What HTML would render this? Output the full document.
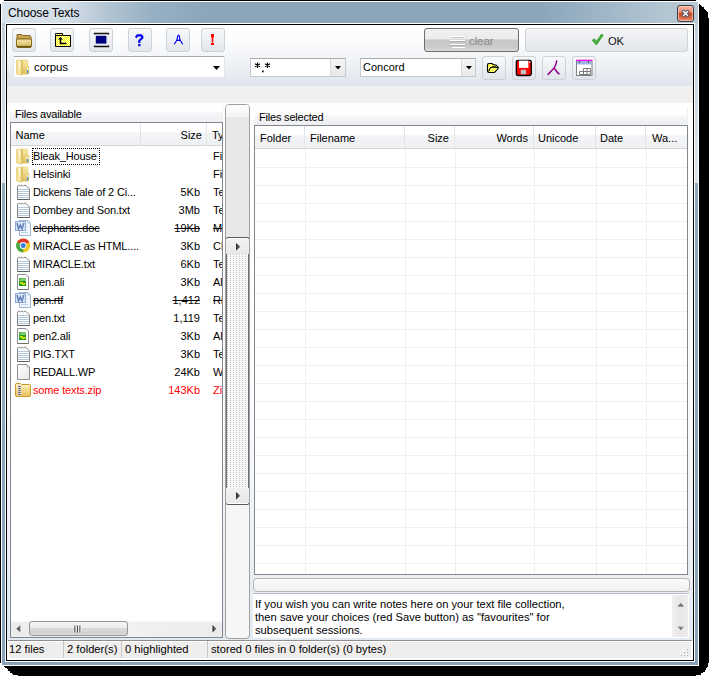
<!DOCTYPE html>
<html><head><meta charset="utf-8">
<style>
*{box-sizing:border-box;margin:0;padding:0}
html,body{width:715px;height:682px;overflow:hidden;background:#fff;position:relative;font-family:"Liberation Sans",sans-serif;font-size:11px;color:#000}
.a{position:absolute}
svg{display:block}
#shadow{position:absolute;left:0;top:0}
#win{position:absolute;left:2px;top:2px;width:696px;height:663px;background:linear-gradient(#bccbd8 0,#c9d6e0 60px,#d6e0e8 150px,#dce5ec 181px,#8fa9bd 181px,#8ba6bb 400px,#88a3b9 100%)}
#title{position:absolute;left:2px;top:2px;width:696px;height:21px;background:linear-gradient(90deg,#d9e3eb 0,#d5dfe8 65px,#b3c5d3 105px,#97b0c3 150px,#8ca7bc 200px,#8ba6bb 540px,#a2b8c8 610px,#b4c5d2 660px,#b8c9d6 100%)}
#titletxt{position:absolute;left:6px;top:4px;font-size:12px;line-height:14px;color:#000;letter-spacing:-0.1px}
#client{position:absolute;left:6px;top:24px;width:688px;height:637px;border:1px solid #000;background:#f0f0f0;outline:1px solid #fff}
#tb{position:absolute;left:7px;top:25px;width:686px;height:61px;background:linear-gradient(#ffffff,#fbfcfd 15px,#eef1f5 40px,#e0e6ed 60px)}
#panel{position:absolute;left:7px;top:103px;width:686px;height:537px;background:linear-gradient(#ffffff,#fbfcfd 300px,#e4eaf1)}
.btn{position:absolute;width:24px;height:24px;border:1px solid #cdd2d9;border-radius:3px;background:linear-gradient(#f8f9fb,#eceff3 50%,#e1e5eb)}
.btn svg{position:absolute;left:0;top:0}
.combo{position:absolute;background:#fff;border:1px solid #c6c9ce;border-top-color:#a8abb0}
.dd{position:absolute;top:0;bottom:0;right:0;border-left:1px solid #d8dadd;background:linear-gradient(#f6f6f6,#e8e8e8)}
#status{position:absolute;left:7px;top:640px;width:686px;height:20px;background:#fff}
#stline{position:absolute;left:8px;top:640px;width:684px;height:1px;background:#8e8e8e}
#stbg{position:absolute;left:9px;top:642px;width:682px;height:16px;background:#f0eded}
.sep{position:absolute;top:641px;width:1px;height:17px;background:#c8c6c6}
.st{position:absolute;top:643px;font-size:11.2px;line-height:13px;white-space:nowrap}

.lbl{position:absolute;font-size:11px;line-height:13px;white-space:nowrap;letter-spacing:-0.2px}
.list{position:absolute;background:#fff;border:1px solid #828790;overflow:hidden}
.hdr{position:absolute;left:0;top:0;height:23px;background:linear-gradient(#ffffff 0,#ffffff 40%,#f3f4f6 45%,#eef0f3 100%);border-bottom:1px solid #d5d5d5}
.hs{position:absolute;top:0;width:1px;height:22px;background:#e3e4e6}
.ht{position:absolute;top:6px;font-size:11px;line-height:13px;white-space:nowrap}
.row{position:absolute;left:0;width:211px;height:18px}
.row svg{position:absolute;left:5px;top:1px;overflow:visible}
.nm{position:absolute;left:22px;top:3px;font-size:11px;line-height:13px;white-space:nowrap;letter-spacing:-0.15px}
.sz{position:absolute;right:22px;top:3px;font-size:11px;line-height:13px;white-space:nowrap;text-align:right}
.ty{position:absolute;left:202px;top:3px;font-size:11px;line-height:13px;white-space:nowrap}
.strike{text-decoration:line-through}
.red{color:#ff0000}
</style></head><body>
<svg id="shadow" width="715" height="682">
<rect x="4" y="0" width="692" height="1" fill="#000"/>
<rect x="0" y="4" width="1" height="659" fill="#000"/>
<path shape-rendering="crispEdges" d="M4,666 L699,666 L699,4 L700,4 L700,5 L701,5 L701,6 L702,6 L702,7 L704,7 L704,9 L705,9 L705,10 L706,10 L706,11 L707,11 L707,12 L708,12 L708,18 L709,18 L709,663 L708,663 L708,667 L707,667 L707,668 L706,668 L706,670 L705,670 L705,672 L703,672 L703,673 L701,673 L701,675 L696,675 L696,676 L18,676 L18,675 L13,675 L13,674 L12,674 L12,673 L10,673 L10,671 L8,671 L8,669 L7,669 L7,668 L5,668 L5,667 L4,667 Z" fill="#000"/>
</svg>
<svg width="0" height="0" style="position:absolute">
<defs>
<linearGradient id="gvf" x1="0" y1="0" x2="1" y2="0"><stop offset="0" stop-color="#f2dc86"/><stop offset=".3" stop-color="#fff6c8"/><stop offset=".6" stop-color="#f0d880"/><stop offset="1" stop-color="#d9b95a"/></linearGradient>
<linearGradient id="gpage" x1="0" y1="0" x2="1" y2="1"><stop offset="0" stop-color="#ffffff"/><stop offset="1" stop-color="#e8e8e8"/></linearGradient>
<linearGradient id="gzip" x1="0" y1="0" x2="0" y2="1"><stop offset="0" stop-color="#fff0b8"/><stop offset="1" stop-color="#e8c060"/></linearGradient>
<symbol id="i-folder" viewBox="0 0 16 16" overflow="visible">
<linearGradient id="gfl" x1="0" y1="0" x2="1" y2="0"><stop offset="0" stop-color="#ecd274"/><stop offset=".45" stop-color="#fbeeb0"/><stop offset="1" stop-color="#e2c464"/></linearGradient>
<linearGradient id="gfr" x1="0" y1="0" x2="0" y2="1"><stop offset="0" stop-color="#f8eaa8"/><stop offset=".5" stop-color="#ecd486"/><stop offset="1" stop-color="#dfc060"/></linearGradient>
<path d="M0.3,2 Q0.3,0.8 1.5,0.8 L11,0.8 Q12.2,0.8 12.2,2 L12.2,7 L13.2,7.6 L13.2,14.6 L12.2,15.2 L6.2,15.6 L5.6,16.4 L1.5,15.6 Q0.3,15.4 0.3,14.4 Z" fill="#e4c86c"/>
<rect x="6.3" y="1.3" width="5.6" height="13.8" fill="url(#gfr)"/>
<path d="M0.8,2 Q0.8,1.2 1.6,1.2 L6.2,1.2 L6.2,15.4 L1.5,15 Q0.8,14.9 0.8,14.3 Z" fill="url(#gfl)"/>
<path d="M6.3,1.5 L6.3,15.3" stroke="#d2b24e" stroke-width=".8"/>
<path d="M2.6,2 L3.6,3 L3.6,9" stroke="#fffdf0" stroke-width="1.1" fill="none"/>
<rect x="11" y="9" width="1.2" height="2.2" fill="#f4f8fc"/>
<rect x="11" y="11" width="1.2" height="3.4" fill="#2f92e0"/>
</symbol>
<symbol id="i-txt" viewBox="0 0 16 16">
<path d="M1.5,2 L3,1 L4.5,2 L6,1 L7.5,2 L9,1 L10.5,2 L13.5,5 L13.5,15.5 L1.5,15.5 Z" fill="#fff" stroke="#8a8a8a" stroke-width="1"/>
<path d="M2,5.5 h11 M2,7.5 h11 M2,9.5 h11 M2,11.5 h11 M2,13.5 h11" stroke="#b4c8dc" stroke-width="1"/>
<path d="M1.5,15.5 h12" stroke="#606060" stroke-width="1"/>
</symbol>
<symbol id="i-blank" viewBox="0 0 16 16">
<path d="M1.5,0.5 L11,0.5 L13.5,3 L13.5,15.5 L1.5,15.5 Z" fill="url(#gpage)" stroke="#8e8e8e" stroke-width="1"/>
<path d="M11,0.5 L11,3 L13.5,3" fill="#fff" stroke="#aaa" stroke-width="1"/>
</symbol>
<symbol id="i-word" viewBox="0 0 16 16" overflow="visible">
<path d="M3.5,0.5 L12,0.5 L14.5,3 L14.5,15.5 L3.5,15.5 Z" fill="#f2f6fc" stroke="#9fb6d6" stroke-width="1"/>
<path d="M12,0.5 L12,3 L14.5,3" fill="none" stroke="#b0c4de" stroke-width="1"/>
<path d="M5,12.5 h7" stroke="#c2d2e6"/>
<rect x="-0.5" y="1.5" width="10" height="9" fill="#dce7f5" stroke="#8eaad6" stroke-width="1"/>
<path d="M1,3 L2.6,9 L4.3,5 L6,9 L7.8,3" fill="none" stroke="#5f7fb8" stroke-width="1.5"/>
</symbol>
<symbol id="i-chrome" viewBox="0 0 16 16">
<circle cx="7.2" cy="7.5" r="7" fill="#f2c81e"/>
<path d="M7.2,7.5 L1.1,4 A7,7 0 0 1 13.26,4 Z" fill="#dc3b2c"/>
<path d="M7.2,7.5 L1.1,4 A7,7 0 0 0 7.2,14.5 Z" fill="#45a845"/>
<circle cx="7.2" cy="7.5" r="3.4" fill="#fff"/>
<circle cx="7.2" cy="7.5" r="2.5" fill="#3b7fd9"/>
</symbol>
<symbol id="i-ali" viewBox="0 0 16 16">
<path d="M1.5,0.5 L10,0.5 L12.5,3 L12.5,15.5 L1.5,15.5 Z" fill="#fff" stroke="#8e8e8e" stroke-width="1"/>
<path d="M1.5,15.5 h11" stroke="#707070"/>
<rect x="3" y="4" width="7" height="8" fill="#1e9a1e"/>
<rect x="3" y="4" width="7" height="3" fill="#7acb6a"/>
<rect x="3.3" y="4.3" width="1.2" height="1.2" fill="#0a6a0a"/>
<path d="M4,9 Q6,8.5 7,10 Q8,11 9,9" fill="none" stroke="#f4f000" stroke-width="1.5"/>
</symbol>
<symbol id="i-zip" viewBox="0 0 16 16" overflow="visible">
<path d="M-0.5,2.5 Q-0.5,1.5 0.5,1.5 L4.5,1.5 L5.5,2.5 L13.5,2.5 Q14.5,2.5 14.5,3.5 L14.5,13.5 Q14.5,14.5 13.5,14.5 L0.5,14.5 Q-0.5,14.5 -0.5,13.5 Z" fill="url(#gzip)" stroke="#c99a2a" stroke-width="1"/>
<path d="M0,4 L14,4" stroke="#fff6d0" stroke-width="1"/>
<rect x="2" y="3" width="3" height="11" fill="#d8d8d8"/>
<path d="M2.5,4.5 h2 M2.5,6.5 h2 M2.5,8.5 h2 M2.5,10.5 h2 M2.5,12.5 h2" stroke="#505050" stroke-width="1"/>
</symbol>
</defs></svg>
<div id="win"></div>
<div id="title"><div id="titletxt">Choose Texts</div></div>
<div class="a" style="left:677px;top:5px;width:17px;height:17px;border:1px solid #3c3c3c;border-radius:3px;background:linear-gradient(#f4b2a0 0,#ea9079 40%,#c64a26 50%,#d25a34 65%,#ec8a6c 100%);box-shadow:inset 0 0 0 1px rgba(255,220,210,.6)">
<svg class="a" style="left:3px;top:3px" width="9" height="9" viewBox="0 0 9 9"><path d="M2.6,2.6 L6.4,6.4 M6.4,2.6 L2.6,6.4" stroke="#3a4660" stroke-width="3" stroke-linecap="square"/><path d="M2.6,2.6 L6.4,6.4 M6.4,2.6 L2.6,6.4" stroke="#fff" stroke-width="1.5" stroke-linecap="square"/></svg></div>
<div id="client"></div>
<div id="tb"></div>
<div id="panel"></div>

<!-- toolbar row 1 -->
<div class="btn" style="left:12px;top:28px"><svg width="22" height="22" viewBox="0 0 22 22">
<defs><linearGradient id="fo1" x1="0" y1="0" x2="0" y2="1"><stop offset="0" stop-color="#f3e4a8"/><stop offset="0.6" stop-color="#e3cb7c"/><stop offset="1" stop-color="#b8973c"/></linearGradient></defs>
<path d="M4,5.5 L9,5.5 L10,6.5 L17,6.5 L18,8 L18,10 L4,10 Z" fill="#c6a652" stroke="#8c6d22" stroke-width="1"/>
<path d="M3.5,10 L18.5,10 L18.5,17.5 L17.5,18.5 L4.5,18.5 L3.5,17.5 Z" fill="url(#fo1)" stroke="#8a6a1c" stroke-width="1"/>
<rect x="4" y="17" width="14" height="1.5" fill="#6e5414"/>
</svg></div>
<div class="btn" style="left:50px;top:28px"><svg width="22" height="22" viewBox="0 0 22 22">
<defs><pattern id="dith" width="2" height="2" patternUnits="userSpaceOnUse"><rect width="2" height="2" fill="#ffff00"/><rect width="1" height="1" fill="#ffffc0"/><rect x="1" y="1" width="1" height="1" fill="#ffffc0"/></pattern></defs>
<path d="M4.5,5.5 L4.5,4.5 L11.5,4.5 L11.5,6.5 L19.5,6.5 L19.5,17.5 L4.5,17.5 Z" fill="url(#dith)" stroke="#000" stroke-width="1"/>
<path d="M5,6.5 L11,6.5" stroke="#000" stroke-width="1"/>
<path d="M7,10.5 L9.5,8 L12,10.5 Z" fill="#000"/>
<path d="M9.5,10 L9.5,14.5 L15.5,14.5" fill="none" stroke="#000" stroke-width="1.5"/>
</svg></div>
<div class="btn" style="left:89px;top:28px"><svg width="22" height="22" viewBox="0 0 22 22">
<path d="M4.5,5.5 L4.5,4.5 L18.5,4.5 L18.5,5.5" fill="none" stroke="#111" stroke-width="1.3"/>
<path d="M4.5,16.5 L4.5,17.5 L18.5,17.5 L18.5,16.5" fill="none" stroke="#111" stroke-width="1.3"/>
<rect x="5.8" y="6.8" width="10.6" height="7.8" fill="#000080"/>
</svg></div>
<div class="btn" style="left:128px;top:28px"><svg width="22" height="22" viewBox="0 0 22 22">
<path d="M6.8,8.6 L8.6,6.3 L12.2,6.3 L13.3,7.6 L13.3,8.8 L10.3,11.8 L10.3,14" fill="none" stroke="#0000f0" stroke-width="2.2" stroke-linejoin="round"/>
<rect x="9.2" y="15" width="2.3" height="2.2" fill="#0000f0"/>
</svg></div>
<div class="btn" style="left:166px;top:28px"><svg width="22" height="22" viewBox="0 0 22 22">
<path d="M7.3,15.3 L10.2,10.5 L10.6,7.2 L11.5,6.2 L12.4,7.2 L12.8,10.5 L15.7,15.3 M9,11.3 L14,11.3" fill="none" stroke="#0000f0" stroke-width="1.2" stroke-linejoin="round"/>
</svg></div>
<div class="btn" style="left:201px;top:28px"><svg width="22" height="22" viewBox="0 0 22 22">
<path d="M9,5 L12,5 L12,8.3 L11.3,8.3 L11.3,13.4 L9.7,13.4 L9.7,8.3 L9,8.3 Z" fill="#ff0000"/>
<rect x="9" y="14" width="3" height="2" fill="#ff0000"/>
</svg></div>

<div class="btn" style="left:424px;top:28px;width:95px;border-color:#6f6f6f;background:linear-gradient(#f1f1f1 0,#ebebeb 45%,#c8c8c8 50%,#c9c9c9 80%,#dadada 100%)"></div>
<svg class="a" style="left:450px;top:36px" width="18" height="12"><rect x="2" y="0" width="12" height="1" fill="#fff"/><rect x="0" y="4" width="15" height="1" fill="#fff"/><rect x="0" y="8" width="15" height="1" fill="#fff"/><rect x="2" y="11" width="13" height="1" fill="#fff"/><rect x="2" y="1" width="12" height="1" fill="#9a9a9a" opacity=".5"/><rect x="0" y="5" width="15" height="1" fill="#9a9a9a" opacity=".6"/><rect x="0" y="9" width="15" height="1" fill="#9a9a9a" opacity=".6"/></svg>
<div class="a" style="left:469px;top:34px;font-size:11.8px;line-height:14px;color:#8a8a8a;letter-spacing:-0.2px">clear</div>
<div class="btn" style="left:525px;top:28px;width:163px;border-color:#cfd3d9;background:linear-gradient(#f4f5f7,#eceef2 50%,#e2e5ea)"></div>
<svg class="a" style="left:591px;top:33px" width="13" height="13" viewBox="0 0 13 13"><path d="M1.2,7.2 L3.4,5.8 L5.4,8.3 L10.6,1 L12.2,2.2 L5.8,11.6 L4.8,11.6 Z" fill="#44b03a" stroke="#2e9a2a" stroke-width=".7" stroke-linejoin="round"/></svg>
<div class="a" style="left:608px;top:33.5px;font-size:11.2px;line-height:14px;color:#111;letter-spacing:-0.3px">OK</div>

<!-- row 2 -->
<div class="combo" style="left:13px;top:56px;width:212px;height:22px;border-radius:2px;border-color:#e2e4e8;border-top-color:#a9acb1">
 <svg class="a" style="left:2px;top:2px;overflow:visible" width="16" height="16"><use href="#i-folder"/></svg>
 <div class="a" style="left:20px;top:4px;font-size:11.5px;line-height:13px;letter-spacing:-0.1px">corpus</div>
 <svg class="a" style="left:199px;top:9px" width="8" height="5"><path d="M0,0 L7,0 L3.5,4 Z" fill="#000"/></svg>
</div>
<div class="combo" style="left:250px;top:58px;width:96px;height:19px">
 <svg class="a" style="left:3px;top:3px" width="20" height="12" viewBox="0 0 20 12"><g stroke="#000" stroke-width="1.1"><path d="M3.5,0.5 v5.5 M1,1.8 L6,4.7 M6,1.8 L1,4.7"/><path d="M13.5,0.5 v5.5 M11,1.8 L16,4.7 M16,1.8 L11,4.7"/></g><rect x="8" y="8.5" width="1.6" height="1.8" fill="#000"/></svg>
 <div class="dd" style="width:15px"><svg class="a" style="left:4px;top:7px" width="7" height="4"><path d="M0,0 L6,0 L3,3.5 Z" fill="#000"/></svg></div>
</div>
<div class="combo" style="left:360px;top:58px;width:116px;height:19px">
 <div class="a" style="left:2px;top:2px;font-size:11px;line-height:13px">Concord</div>
 <div class="dd" style="width:14px"><svg class="a" style="left:4px;top:7px" width="7" height="4"><path d="M0,0 L6,0 L3,3.5 Z" fill="#000"/></svg></div>
</div>
<div class="btn" style="left:482px;top:56px"><svg width="22" height="22" viewBox="0 0 22 22">
<path d="M4.5,8 Q4.5,6.5 6,6.5 L9,6.5 L10,7.5 L13,8 L15.5,10.5 L13.5,13.5 L11.5,15.5 L6,15.5 Q4.5,15.5 4.5,14 Z" fill="url(#dith)" stroke="#000" stroke-width="1.1"/>
<path d="M5.5,14.5 L7.5,10.5 L9,10.5 L10,9.5 L11,10.5 L12,9.5 L13,10.5 L15,10.5" fill="none" stroke="#000" stroke-width="1.1"/>
</svg></div>
<div class="btn" style="left:512px;top:56px"><svg width="22" height="22" viewBox="0 0 22 22">
<rect x="3.3" y="3.3" width="15" height="15.2" rx="1.8" fill="#ff0000" stroke="#000" stroke-width="1.3"/>
<rect x="6" y="3.6" width="9.4" height="7.3" fill="#fff"/>
<rect x="16" y="4.5" width="1.2" height="1.2" fill="#fff"/>
<rect x="7.7" y="12.7" width="5.5" height="4.6" fill="#c0c0c0"/>
</svg></div>
<div class="btn" style="left:542px;top:56px"><svg width="22" height="22" viewBox="0 0 22 22">
<path d="M13.6,4 Q13.4,6.5 12.6,8 Q11.8,9.8 10.8,11.2 Q9.5,12.5 8.3,14 Q7,15.5 5,17.5 M10.8,11.2 Q12,12 13,13.5 Q14.3,15.5 16,16.8" fill="none" stroke="#8a008a" stroke-width="1.5" stroke-linecap="round"/>
</svg></div>
<div class="btn" style="left:572px;top:56px"><svg width="22" height="22" viewBox="0 0 22 22">
<rect x="3.5" y="4.5" width="15.5" height="14" fill="#fff" stroke="#808080" stroke-width="1"/>
<rect x="3" y="2.7" width="16.5" height="1.3" fill="#ff00ff"/>
<rect x="4" y="4" width="14.5" height="3.5" fill="#9db4e4"/>
<rect x="6" y="3.5" width="1" height="2.5" fill="#555"/><rect x="15" y="3.5" width="1" height="2.5" fill="#555"/>
<path d="M10.5,11.5 h7 v6 h-11 v-3 h11 M10.5,11.5 v6 M14,11.5 v6" fill="none" stroke="#7a7a7a" stroke-width="1"/>
</svg></div>



<!-- left panel -->
<div class="a" style="left:10px;top:112px;width:213px;height:10px;background:linear-gradient(#f7f8f9,#eceef1)"></div>
<div class="a" style="left:222px;top:106px;width:1px;height:16px;background:#eef0f2"></div>
<div class="lbl" style="left:15px;top:108px">Files available</div>
<div class="list" style="left:10px;top:122px;width:213px;height:516px">
 <div class="hdr" style="width:211px"></div>
 <div class="hs" style="left:129px"></div><div class="hs" style="left:195px"></div>
 <div class="ht" style="left:4.5px">Name</div>
 <div class="ht" style="left:163px;width:28px;text-align:right">Size</div>
 <div class="ht" style="left:201px">Type</div>
 <div class="row" style="top:24px"><svg width="16" height="16"><use href="#i-folder"/></svg><span class="nm">Bleak_House</span><span class="sz"></span><span class="ty">Fi</span></div>
<div class="row" style="top:42px"><svg width="16" height="16"><use href="#i-folder"/></svg><span class="nm">Helsinki</span><span class="sz"></span><span class="ty">Fi</span></div>
<div class="row" style="top:60px"><svg width="16" height="16"><use href="#i-txt"/></svg><span class="nm">Dickens Tale of 2 Ci...</span><span class="sz">5Kb</span><span class="ty">Te</span></div>
<div class="row" style="top:78px"><svg width="16" height="16"><use href="#i-txt"/></svg><span class="nm">Dombey and Son.txt</span><span class="sz">3Mb</span><span class="ty">Te</span></div>
<div class="row" style="top:96px"><svg width="16" height="16"><use href="#i-word"/></svg><span class="nm strike">elephants.doc</span><span class="sz strike">19Kb</span><span class="ty strike">M</span></div>
<div class="row" style="top:114px"><svg width="16" height="16"><use href="#i-chrome"/></svg><span class="nm">MIRACLE as HTML....</span><span class="sz">3Kb</span><span class="ty">Cl</span></div>
<div class="row" style="top:132px"><svg width="16" height="16"><use href="#i-txt"/></svg><span class="nm">MIRACLE.txt</span><span class="sz">6Kb</span><span class="ty">Te</span></div>
<div class="row" style="top:150px"><svg width="16" height="16"><use href="#i-ali"/></svg><span class="nm">pen.ali</span><span class="sz">3Kb</span><span class="ty">Al</span></div>
<div class="row" style="top:168px"><svg width="16" height="16"><use href="#i-word"/></svg><span class="nm strike">pen.rtf</span><span class="sz strike">1,412</span><span class="ty strike">Ri</span></div>
<div class="row" style="top:186px"><svg width="16" height="16"><use href="#i-txt"/></svg><span class="nm">pen.txt</span><span class="sz">1,119</span><span class="ty">Te</span></div>
<div class="row" style="top:204px"><svg width="16" height="16"><use href="#i-ali"/></svg><span class="nm">pen2.ali</span><span class="sz">3Kb</span><span class="ty">Al</span></div>
<div class="row" style="top:222px"><svg width="16" height="16"><use href="#i-txt"/></svg><span class="nm">PIG.TXT</span><span class="sz">3Kb</span><span class="ty">Te</span></div>
<div class="row" style="top:240px"><svg width="16" height="16"><use href="#i-blank"/></svg><span class="nm">REDALL.WP</span><span class="sz">24Kb</span><span class="ty">W</span></div>
<div class="row" style="top:258px"><svg width="16" height="16"><use href="#i-zip"/></svg><span class="nm red">some texts.zip</span><span class="sz red">143Kb</span><span class="ty red">Zi</span></div>

 <div class="a" style="left:21px;top:25px;width:68px;height:17px;border:1px dotted #000"></div>
 <div class="a" style="left:0;top:498px;width:211px;height:16px;background:linear-gradient(90deg,#ececec,#f2f2f2 50%,#ececec);border-top:1px solid #f8f8f8"></div>
 <svg class="a" style="left:5px;top:502px" width="5" height="8"><defs><linearGradient id="sgb" x1="1" x2="0"><stop offset="0" stop-color="#8a8a8a"/><stop offset="1" stop-color="#222"/></linearGradient></defs><path d="M4.5,0 L0.5,3.75 L4.5,7.5 Z" fill="url(#sgb)"/></svg>
 <svg class="a" style="left:201px;top:502px" width="5" height="8"><path d="M0.5,0 L4.5,3.75 L0.5,7.5 Z" fill="url(#sga)"/></svg>
 <div class="a" style="left:18px;top:498px;width:99px;height:15px;border:1px solid #979797;border-radius:3px;background:linear-gradient(#f4f4f4,#ececec 45%,#d9d9d9 50%,#d2d2d2 85%,#dcdcdc)"></div>
 <svg class="a" style="left:63px;top:502px" width="8" height="8"><path d="M1,0.5 v7 M3.5,0.5 v7 M6,0.5 v7" stroke="#444" stroke-width="1.2"/><path d="M2,0.5 v7 M4.5,0.5 v7 M7,0.5 v7" stroke="#fff" stroke-width="0.8"/></svg>
</div>

<!-- splitter -->
<div class="a" style="left:225px;top:104px;width:25px;height:535px;border:1px solid #a0a0a0;border-radius:4px;background:#f6f6f6;overflow:hidden">
 <div class="a" style="left:0;top:0;width:23px;height:12px;background:linear-gradient(#fdfdfd,#f4f4f4)"></div>
 <div class="a" style="left:0;top:12px;width:23px;height:120px;background:#e8e8e8"></div>
 <div class="a" style="left:0;top:132px;width:23px;height:2px;border:1px solid #5a5a5a;border-bottom:none;border-radius:2px 2px 0 0;background:#fff"></div>
 <div class="a" style="left:0;top:134px;width:23px;height:15px;background:linear-gradient(#f2f2f2,#e8e8e8)"></div>
 <svg class="a" style="left:10px;top:138px" width="5" height="8"><defs><linearGradient id="sga" x1="0" x2="1"><stop offset="0" stop-color="#222"/><stop offset="1" stop-color="#8a8a8a"/></linearGradient></defs><path d="M0,0 L4.5,3.75 L0,7.5 Z" fill="url(#sga)"/></svg>
 <div class="a" style="left:0;top:149px;width:23px;height:234px;background-color:#f7f7f7;background-image:linear-gradient(#f7f7f7 1px,transparent 1px),linear-gradient(90deg,transparent 1px,#c2c2c2 1px,#c2c2c2 2px,transparent 2px);background-size:3px 2px,3px 2px;background-position:0 1px,2px 1px;background-blend-mode:normal;border-left:1px solid #6e6e6e;border-right:1px solid #6e6e6e"></div>
 <div class="a" style="left:0;top:383px;width:23px;height:15px;background:linear-gradient(#f2f2f2,#e8e8e8)"></div>
 <svg class="a" style="left:10px;top:387px" width="5" height="8"><path d="M0,0 L4.5,3.75 L0,7.5 Z" fill="url(#sga)"/></svg>
 <div class="a" style="left:0;top:398px;width:23px;height:2px;border:1px solid #5a5a5a;border-top:none;border-radius:0 0 2px 2px;background:#fff"></div>
</div>

<!-- right panel -->
<div class="a" style="left:254px;top:115px;width:434px;height:10px;background:linear-gradient(#f7f8f9,#eceef1)"></div>
<div class="a" style="left:687px;top:108px;width:1px;height:17px;background:#eef0f2"></div>
<div class="lbl" style="left:259px;top:111px">Files selected</div>
<div class="list" style="left:254px;top:125px;width:434px;height:450px">
 <div class="hdr" style="width:432px"></div>
 <div class="a" style="left:50px;top:23px;width:1px;height:430px;background:#efefef"></div><div class="a" style="left:150px;top:23px;width:1px;height:430px;background:#efefef"></div><div class="a" style="left:200px;top:23px;width:1px;height:430px;background:#efefef"></div><div class="a" style="left:279px;top:23px;width:1px;height:430px;background:#efefef"></div><div class="a" style="left:341px;top:23px;width:1px;height:430px;background:#efefef"></div><div class="a" style="left:391px;top:23px;width:1px;height:430px;background:#efefef"></div><div class="a" style="left:0;top:41px;width:432px;height:1px;background:#efefef"></div><div class="a" style="left:0;top:59px;width:432px;height:1px;background:#efefef"></div><div class="a" style="left:0;top:77px;width:432px;height:1px;background:#efefef"></div><div class="a" style="left:0;top:95px;width:432px;height:1px;background:#efefef"></div><div class="a" style="left:0;top:113px;width:432px;height:1px;background:#efefef"></div><div class="a" style="left:0;top:131px;width:432px;height:1px;background:#efefef"></div><div class="a" style="left:0;top:149px;width:432px;height:1px;background:#efefef"></div><div class="a" style="left:0;top:167px;width:432px;height:1px;background:#efefef"></div><div class="a" style="left:0;top:185px;width:432px;height:1px;background:#efefef"></div><div class="a" style="left:0;top:203px;width:432px;height:1px;background:#efefef"></div><div class="a" style="left:0;top:221px;width:432px;height:1px;background:#efefef"></div><div class="a" style="left:0;top:239px;width:432px;height:1px;background:#efefef"></div><div class="a" style="left:0;top:257px;width:432px;height:1px;background:#efefef"></div><div class="a" style="left:0;top:275px;width:432px;height:1px;background:#efefef"></div><div class="a" style="left:0;top:293px;width:432px;height:1px;background:#efefef"></div><div class="a" style="left:0;top:311px;width:432px;height:1px;background:#efefef"></div><div class="a" style="left:0;top:329px;width:432px;height:1px;background:#efefef"></div><div class="a" style="left:0;top:347px;width:432px;height:1px;background:#efefef"></div><div class="a" style="left:0;top:365px;width:432px;height:1px;background:#efefef"></div><div class="a" style="left:0;top:383px;width:432px;height:1px;background:#efefef"></div><div class="a" style="left:0;top:401px;width:432px;height:1px;background:#efefef"></div><div class="a" style="left:0;top:419px;width:432px;height:1px;background:#efefef"></div><div class="a" style="left:0;top:437px;width:432px;height:1px;background:#efefef"></div><div class="hs" style="left:49px"></div><div class="hs" style="left:149px"></div><div class="hs" style="left:199px"></div><div class="hs" style="left:278px"></div><div class="hs" style="left:340px"></div><div class="hs" style="left:390px"></div>
 <div class="ht" style="left:5px">Folder</div>
 <div class="ht" style="left:55px">Filename</div>
 <div class="ht" style="left:150px;width:44px;text-align:right">Size</div>
 <div class="ht" style="left:200px;width:73px;text-align:right">Words</div>
 <div class="ht" style="left:283px">Unicode</div>
 <div class="ht" style="left:345px">Date</div>
 <div class="ht" style="left:397px">Wa...</div>
</div>
<div class="a" style="left:253px;top:578px;width:437px;height:14px;border:1px solid #b4b4b4;border-radius:4px;background:linear-gradient(#fbfbfb,#f0f0f0)"></div>
<div class="a" style="left:253px;top:593px;width:436px;height:45px;background:#fff;border-top:1px solid #b8bec6">
 <div class="a" style="left:2px;top:4px;font-size:11.2px;line-height:13px;white-space:nowrap">If you wish you can write notes here on your text file collection,<br>then save your choices (red Save button) as "favourites" for<br>subsequent sessions.</div>
 <div class="a" style="left:419px;top:1px;width:16px;height:42px;background:linear-gradient(90deg,#f0f0f0,#e8e8e8 50%,#ececec)"></div>
 <svg class="a" style="left:424px;top:8px" width="8" height="5"><defs><linearGradient id="sgc" x1="0" y1="0" x2="0" y2="1"><stop offset="0" stop-color="#9a9a9a"/><stop offset="1" stop-color="#5a5a5a"/></linearGradient></defs><path d="M0.5,4.5 L3.75,0.8 L7,4.5 Z" fill="url(#sgc)"/></svg>
 <svg class="a" style="left:424px;top:32px" width="8" height="5"><path d="M0.5,0.5 L7,0.5 L3.75,4.2 Z" fill="url(#sgc)"/></svg>
</div>
<!-- status -->
<div id="status"></div><div id="stline"></div><div id="stbg"></div>
<svg class="a" style="left:680px;top:648px" width="9" height="9"><g fill="#fff"><rect x="6" y="0" width="1" height="1"/><rect x="3" y="3" width="1" height="1"/><rect x="6" y="3" width="1" height="1"/><rect x="0" y="6" width="1" height="1"/><rect x="3" y="6" width="1" height="1"/><rect x="6" y="6" width="1" height="1"/></g><g fill="#a8a8a8"><rect x="7" y="1" width="1" height="1"/><rect x="4" y="4" width="1" height="1"/><rect x="7" y="4" width="1" height="1"/><rect x="1" y="7" width="1" height="1"/><rect x="4" y="7" width="1" height="1"/><rect x="7" y="7" width="1" height="1"/></g></svg>
<div class="sep" style="left:63px"></div>
<div class="sep" style="left:121px"></div>
<div class="sep" style="left:207px"></div>
<div class="st" style="left:9px">12 files</div>
<div class="st" style="left:67px">2 folder(s)</div>
<div class="st" style="left:125px">0 highlighted</div>
<div class="st" style="left:211px">stored 0 files in 0 folder(s) (0 bytes)</div>
</body></html>
